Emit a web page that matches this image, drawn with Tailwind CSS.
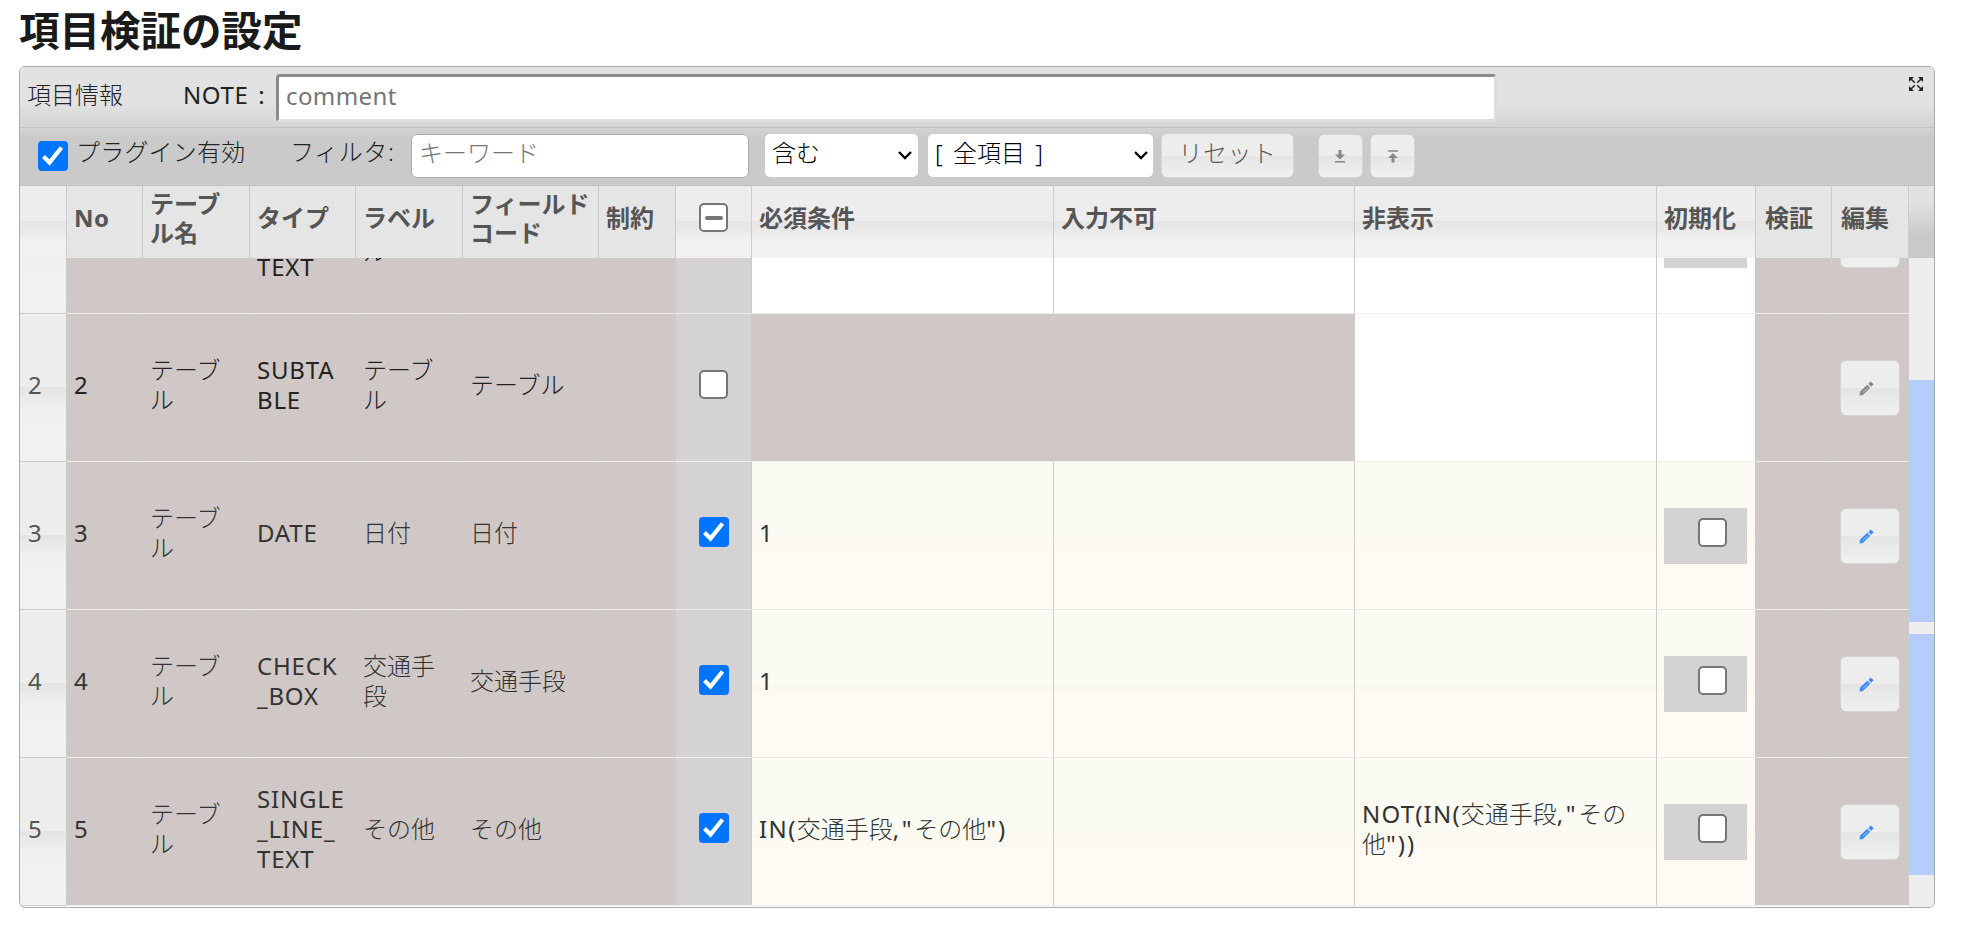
<!doctype html>
<html lang="ja">

<head>
  <meta charset="UTF-8">
  <meta name="viewport" content="width=device-width, initial-scale=1.0">
  <title>項目検証の設定</title>
  <script src="https://cdn.jsdelivr.net/npm/@tailwindcss/browser@4"></script>
</head>

<body class="h-screen overflow-hidden bg-white pl-[19px] font-['Noto_Sans','Noto_Sans_CJK_JP',sans-serif] text-[24px] leading-[30px] font-light text-[#222]">
  <h1 class="h-[66px] pt-[2px] text-[40.5px] leading-[58px] font-bold text-[#1a1a1a] whitespace-nowrap">項目検証の設定</h1>

  <div class="flex flex-col w-[1916px] h-[842px] border border-[#aaa] rounded-[6px] overflow-hidden">
    <!-- title -->
    <div class="flex h-[61px] shrink-0 border-b border-[#c2c2c2] bg-linear-to-b from-[#e2e2e2] from-60% to-[#d4d4d4] pl-[7px]">
      <span class="w-[156px] pt-[13px] whitespace-nowrap">項目情報</span>
      <span class="w-[93px] pt-[13px] whitespace-nowrap font-normal tracking-[0.6px] [word-spacing:3px]">NOTE :</span>
      <input type="text" placeholder="comment"
        class="mt-[7px] w-[1221px] h-[48px] px-[7px] pb-[5px] bg-white font-normal border-3 border-t-[#8b8b8b] border-l-[#8b8b8b] border-b-[#dfdcdc] border-r-[#dfdcdc] rounded-[4px] placeholder:text-[#757575] tracking-[0.4px]">
      <svg class="ml-auto mr-[11px] mt-[10px] size-[14px]" viewBox="0 0 14 14" fill="#222" stroke="#222" stroke-width="1.5">
        <path stroke="none" d="M0 0h5L0 5zM14 0v5L9 0zM0 14V9l5 5zM14 14H9l5-5z" />
        <path d="M2 2l3.8 3.8M12 2L8.200 5.800M2 12l3.800-3.800M12 12L8.200 8.200" />
      </svg>
    </div>

    <!-- toolbar -->
    <div class="flex h-[58px] shrink-0 border-b border-[#c2c2c2] bg-linear-to-b from-[#d3d3d3] to-[#cacaca] to-20% whitespace-nowrap">
      <div class="ml-[18px] mt-[13px] size-[30px] rounded-[4px] bg-[#0075ff]">
        <svg class="size-[30px]" viewBox="0 0 30 30" fill="none" stroke="#fff" stroke-width="4.200">
          <path d="M5.500 15.500l6 6L23.500 6.500" />
        </svg>
      </div>
      <span class="ml-[8px] mt-[9px] w-[214px] tracking-[0.2px]">プラグイン有効</span>
      <span class="mt-[9px] w-[121px] tracking-[0.6px]">フィルタ:</span>
      <input type="text" placeholder="キーワード"
        class="mt-[6px] w-[338px] h-[44px] px-[7px] pb-[7px] bg-white border border-[#aaa] rounded-[6px] placeholder:text-[#757575]">
      <div class="flex justify-between items-center ml-[16px] mt-[6px] w-[153px] h-[43px] pl-[7px] pr-[6px] bg-white rounded-[5px] text-black">
        <span class="pb-[6px]">含む</span>
        <svg class="w-[14px] h-[9px]" viewBox="0 0 14 9" fill="none" stroke="#000" stroke-width="2.300"><path d="M1 1l6 6 6-6" /></svg>
      </div>
      <div class="flex justify-between items-center ml-[10px] mt-[6px] w-[225px] h-[43px] pl-[7px] pr-[5px] bg-white rounded-[5px] text-black">
        <span class="pb-[6px] [word-spacing:4px]">[ 全項目 ]</span>
        <svg class="w-[14px] h-[9px]" viewBox="0 0 14 9" fill="none" stroke="#000" stroke-width="2.300"><path d="M1 1l6 6 6-6" /></svg>
      </div>
      <button type="button"
        class="ml-[8px] mt-[5px] w-[133px] h-[45px] pb-[6px] border border-[#d3d3d3] rounded-[6px] text-[#555] tracking-[0.5px] bg-[linear-gradient(#ededed_50%,#e4e4e4_50%,#f1f1f1)]">リセット</button>
      <button type="button"
        class="flex justify-center items-center ml-[24px] mt-[6px] w-[45px] h-[44px] border border-[#d3d3d3] rounded-[6px] bg-[linear-gradient(#ededed_50%,#e4e4e4_50%,#f1f1f1)]">
        <svg class="w-[10px] h-[13px] ml-[-2px]" viewBox="0 0 10 13" fill="#888"><path d="M3.500 0h3v4.500H10L5 9.500 0 4.500h3.500zM0 11h10v1.500H0z" /></svg>
      </button>
      <button type="button"
        class="flex justify-center items-center ml-[7px] mt-[6px] w-[45px] h-[44px] border border-[#d3d3d3] rounded-[6px] bg-[linear-gradient(#ededed_50%,#e4e4e4_50%,#f1f1f1)]">
        <svg class="w-[10px] h-[13px]" viewBox="0 0 10 13" fill="#888"><path d="M3.500 12.500h3V8H10L5 3 0 8h3.500zM0 .2h10v1.500H0z" /></svg>
      </button>
    </div>

    <!-- column headers -->
    <div id="head"
      class="grid grid-cols-[47px_76px_107px_106px_107px_136px_77px_76px_302px_301px_302px_99px_76px_77px_25px] h-[72px] shrink-0 font-bold text-[#555] leading-[29px] whitespace-nowrap bg-linear-to-b from-[#e2e2e2] from-20% to-[#c9c9c9] to-70%">
    </div>

    <div class="flex h-[649px] overflow-hidden">
      <div id="rows" class="w-[1889px] shrink-0 -mt-[92px]"></div>
      <div class="w-[25px] bg-[#eee] flex flex-col pt-[122px] gap-[12px]">
        <div class="h-[242px] bg-[#b5cdfb]"></div>
        <div class="h-[241px] bg-[#b5cdfb]"></div>
      </div>
    </div>
  </div>

  <script>
    const headGray = 'flex items-center pl-[7px] pb-[9px] border-r border-[#ccc] bg-[#e5e5e5]'
    const headGrayWide = 'flex items-center pl-[9px] pb-[9px] border-r border-[#ccc] bg-[#e5e5e5]'
    const headLight = 'flex items-center pl-[7px] pb-[9px] border-r border-[#ccc] bg-[linear-gradient(#ededed_48%,#e5e5e5_48%,#e9e9e9_62%,#f0f0f0_72%,#f1f1f1)]'
    const numCell = 'flex items-center pl-[8px] pb-[5px] border-r border-b border-[#ccc] text-[#555] font-normal bg-[linear-gradient(#ededed_50%,#e4e4e4_50%,#f0f0f0_64%,#f1f1f1)]'
    const grayCell = 'flex items-center pl-[7px] pb-[5px] border-r border-b border-r-[#ccc] border-b-[#eee] bg-[#d0c8c6]'
    const checkCell = 'flex justify-center items-center pb-[7px] border-r border-b border-r-[#ccc] border-b-[#eee] bg-[#d4d2d3]'
    const whiteCell = 'flex items-center pl-[7px] pb-[5px] border-r border-b border-r-[#ccc] border-b-[#eee] bg-white'
    const yellowCell = 'flex items-center pl-[7px] pb-[5px] border-r border-b border-r-[#ccc] border-b-[#eaeaea] bg-[linear-gradient(#fbfbf4_49%,#fbf9ee_53%,#fdfbf4_62%,#fefbf5)]'

    const boxOff = '<div class="size-[29px] border-2 border-[#767676] rounded-[5px] bg-white"></div>'
    const boxMixed = '<div class="flex justify-center items-center size-[29px] border-2 border-[#767676] rounded-[5px] bg-white"><div class="w-[18px] h-[4px] rounded-[2px] bg-[#767676]"></div></div>'
    const boxOn = '<svg class="size-[30px] rounded-[4px] bg-[#0075ff]" viewBox="0 0 30 30" fill="none" stroke="#fff" stroke-width="4.200"><path d="M5.500 15.500l6 6L23.500 6.500"/></svg>'

    const heads = [
      ['', headLight], ['<span class="tracking-[0.5px]">No</span>', headGray], ['テーブ<br>ル名', headGray], ['タイプ', headGray],
      ['ラベル', headGray], ['フィールド<br>コード', headGray], ['制約', headGray], [boxMixed, headLight],
      ['必須条件', headLight], ['入力不可', headLight], ['非表示', headLight], ['初期化', headLight],
      ['検証', headGrayWide], ['編集', headGrayWide],
    ]
    document.getElementById('head').innerHTML = heads.map(([text, cls], i) =>
      i == 7 ? `<div class="${cls}"><div class="ml-[16px]">${text}</div></div>` : `<div class="${cls}"><div>${text}</div></div>`
    ).join('')

    const req5 = '<span class="font-normal tracking-[1.4px]">IN(</span>交通手段<span class="font-normal tracking-[2.6px]">,"</span>その他<span class="font-normal tracking-[2px]">")</span>'
    const hide5 = '<span class="font-normal tracking-[1.2px]">NOT(IN(</span>交通手段<span class="font-normal tracking-[2.6px]">,"</span>その<br>他<span class="font-normal tracking-[2px]">"))</span>'

    const rows = [
      { no: '', table: '', type: '<br><br>TEXT', label: '<br>ル', code: '', box: '', req: '', hide: '', cond: whiteCell, init: true },
      { no: 2, table: 'テーブ<br>ル', type: 'SUBTA<br>BLE', label: 'テーブ<br>ル', code: 'テーブル', box: boxOff, req: '', hide: '', cond: whiteCell, init: false },
      { no: 3, table: 'テーブ<br>ル', type: 'DATE', label: '日付', code: '日付', box: boxOn, req: '<span class="font-normal">1</span>', hide: '', cond: yellowCell, init: true },
      { no: 4, table: 'テーブ<br>ル', type: 'CHECK<br>_BOX', label: '交通手<br>段', code: '交通手段', box: boxOn, req: '<span class="font-normal">1</span>', hide: '', cond: yellowCell, init: true },
      { no: 5, table: 'テーブ<br>ル', type: 'SINGLE<br>_LINE_<br>TEXT', label: 'その他', code: 'その他', box: boxOn, req: req5, hide: hide5, cond: yellowCell, init: true },
    ]

    const pencil = (color) => `<button type="button" class="flex justify-center items-center w-[60px] h-[56px] mt-[5px] ml-px pr-[8px] border border-[#d3d3d3] rounded-[6px] bg-[linear-gradient(#ededed_50%,#e4e4e4_50%,#f1f1f1)]">
      <svg class="size-[15px] mt-[2px]" viewBox="0 0 15 15">
        <path fill="${color}" d="M.5 14.500L1 10.800 8.200 3.800l3 3L4 14zM9.300 2.900L11.700.5l3 2.800-2.500 2.500z"/>
        <path stroke="#eee" stroke-opacity=".6" stroke-width="1" d="M4 11.500l4.800-4.800"/>
      </svg></button>`
    const initBox = `<div class="w-[83px] h-[56px] mt-[5px] pl-[34px] pt-[10px] bg-[#d3d3d3]">${boxOff}</div>`

    document.getElementById('rows').innerHTML = rows.map(r => {
      const locked = r.no == 2 ? grayCell : r.cond
      return `<div class="grid grid-cols-[47px_76px_107px_106px_107px_136px_77px_76px_302px_301px_302px_99px_76px_77px] h-[148px] whitespace-nowrap ${r.no < 3 ? 'text-[#222]' : 'text-[#333]'}">
        <div class="${numCell}">${r.no}</div>
        <div class="${grayCell}"><span class="font-normal">${r.no}</span></div>
        <div class="${grayCell}"><div>${r.table}</div></div>
        <div class="${grayCell}"><div class="font-normal tracking-[0.8px]">${r.type}</div></div>
        <div class="${grayCell}"><div>${r.label}</div></div>
        <div class="${grayCell}">${r.code}</div>
        <div class="${grayCell}"></div>
        <div class="${checkCell}">${r.box}</div>
        <div class="${locked}"><div>${r.req}</div></div>
        <div class="${locked}"></div>
        <div class="${r.cond}"><div>${r.hide}</div></div>
        <div class="${r.cond}">${r.init ? initBox : ''}</div>
        <div class="${grayCell}"></div>
        <div class="${grayCell}">${pencil(r.no < 3 ? '#888' : '#3b8bff')}</div>
      </div>`
    }).join('')
  </script>
</body>

</html>
